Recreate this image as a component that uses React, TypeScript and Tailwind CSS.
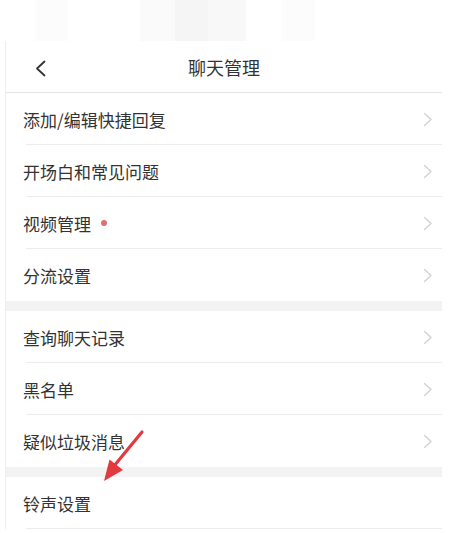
import React from "react";

const Chevron = () => (
  <svg width="10" height="15" viewBox="0 0 10 15" fill="none">
    <path d="M1.5 1.5 L8 7.5 L1.5 13.5" stroke="#d2d2d2" strokeWidth="1.4" strokeLinecap="round" strokeLinejoin="round" />
  </svg>
);

type Item = { label: string; dot?: boolean; chevron?: boolean };

const Row = ({ item, last }: { item: Item; last?: boolean }) => (
  <div className="relative h-[52px] flex items-center pl-[17px] pr-[9px]">
    <span className="text-[17px] text-[#333333] leading-none">{item.label}</span>
    {item.dot && <span className="ml-[10px] w-[6px] h-[6px] rounded-full bg-[#e07070]" />}
    <div className="flex-1" />
    {item.chevron !== false && <Chevron />}
    {!last && <div className="absolute left-[20px] right-0 bottom-0 h-px bg-[#ececec]" />}
  </div>
);

const groups: Item[][] = [
  [
    { label: "添加/编辑快捷回复" },
    { label: "开场白和常见问题" },
    { label: "视频管理", dot: true },
    { label: "分流设置" },
  ],
  [
    { label: "查询聊天记录" },
    { label: "黑名单" },
    { label: "疑似垃圾消息" },
  ],
  [{ label: "铃声设置", chevron: false }],
];

export default function App() {
  return (
    <div
      className="relative w-[458px] h-[533px] overflow-hidden bg-white"
      style={{ fontFamily: '"Noto Sans CJK SC", "Noto Sans", sans-serif' }}
    >
      <div className="h-[41px] flex">
        <div className="w-[35px]" />
        <div className="w-[33px] bg-[#fcfcfc]" />
        <div className="w-[72px]" />
        <div className="w-[35px] bg-[#fafafa]" />
        <div className="w-[33px] bg-[#f5f5f5]" />
        <div className="w-[38px] bg-[#f8f8f8]" />
        <div className="w-[36px]" />
        <div className="w-[33px] bg-[#fcfcfc]" />
      </div>
      <div className="ml-[5px] w-[437px] border-l border-[#eeeeee]">
        <div className="relative h-[52px] flex items-center justify-center border-b border-[#e6e6e6]">
          <svg className="absolute left-[29px] top-[19px]" width="11" height="17" viewBox="0 0 11 17" fill="none">
            <path d="M9.5 1.5 L2 8.5 L9.5 15.5" stroke="#333333" strokeWidth="1.8" strokeLinecap="round" strokeLinejoin="round" />
          </svg>
          <span className="text-[18px] text-[#333333] leading-none">聊天管理</span>
        </div>
        {groups.map((g, gi) => (
          <div key={gi}>
            {gi > 0 && <div className="h-[10px] bg-[#f3f3f3]" />}
            {g.map((it, i) => (
              <Row key={it.label} item={it} last={i === g.length - 1 && gi !== groups.length - 1} />
            ))}
          </div>
        ))}
      </div>
      <svg className="absolute left-0 top-0 pointer-events-none" width="458" height="533" viewBox="0 0 458 533">
        <line x1="142" y1="432" x2="114" y2="466" stroke="#e23b3f" strokeWidth="3.2" strokeLinecap="round" />
        <polygon points="104,481 109.5,459.5 123,470" fill="#e23b3f" />
      </svg>
    </div>
  );
}
